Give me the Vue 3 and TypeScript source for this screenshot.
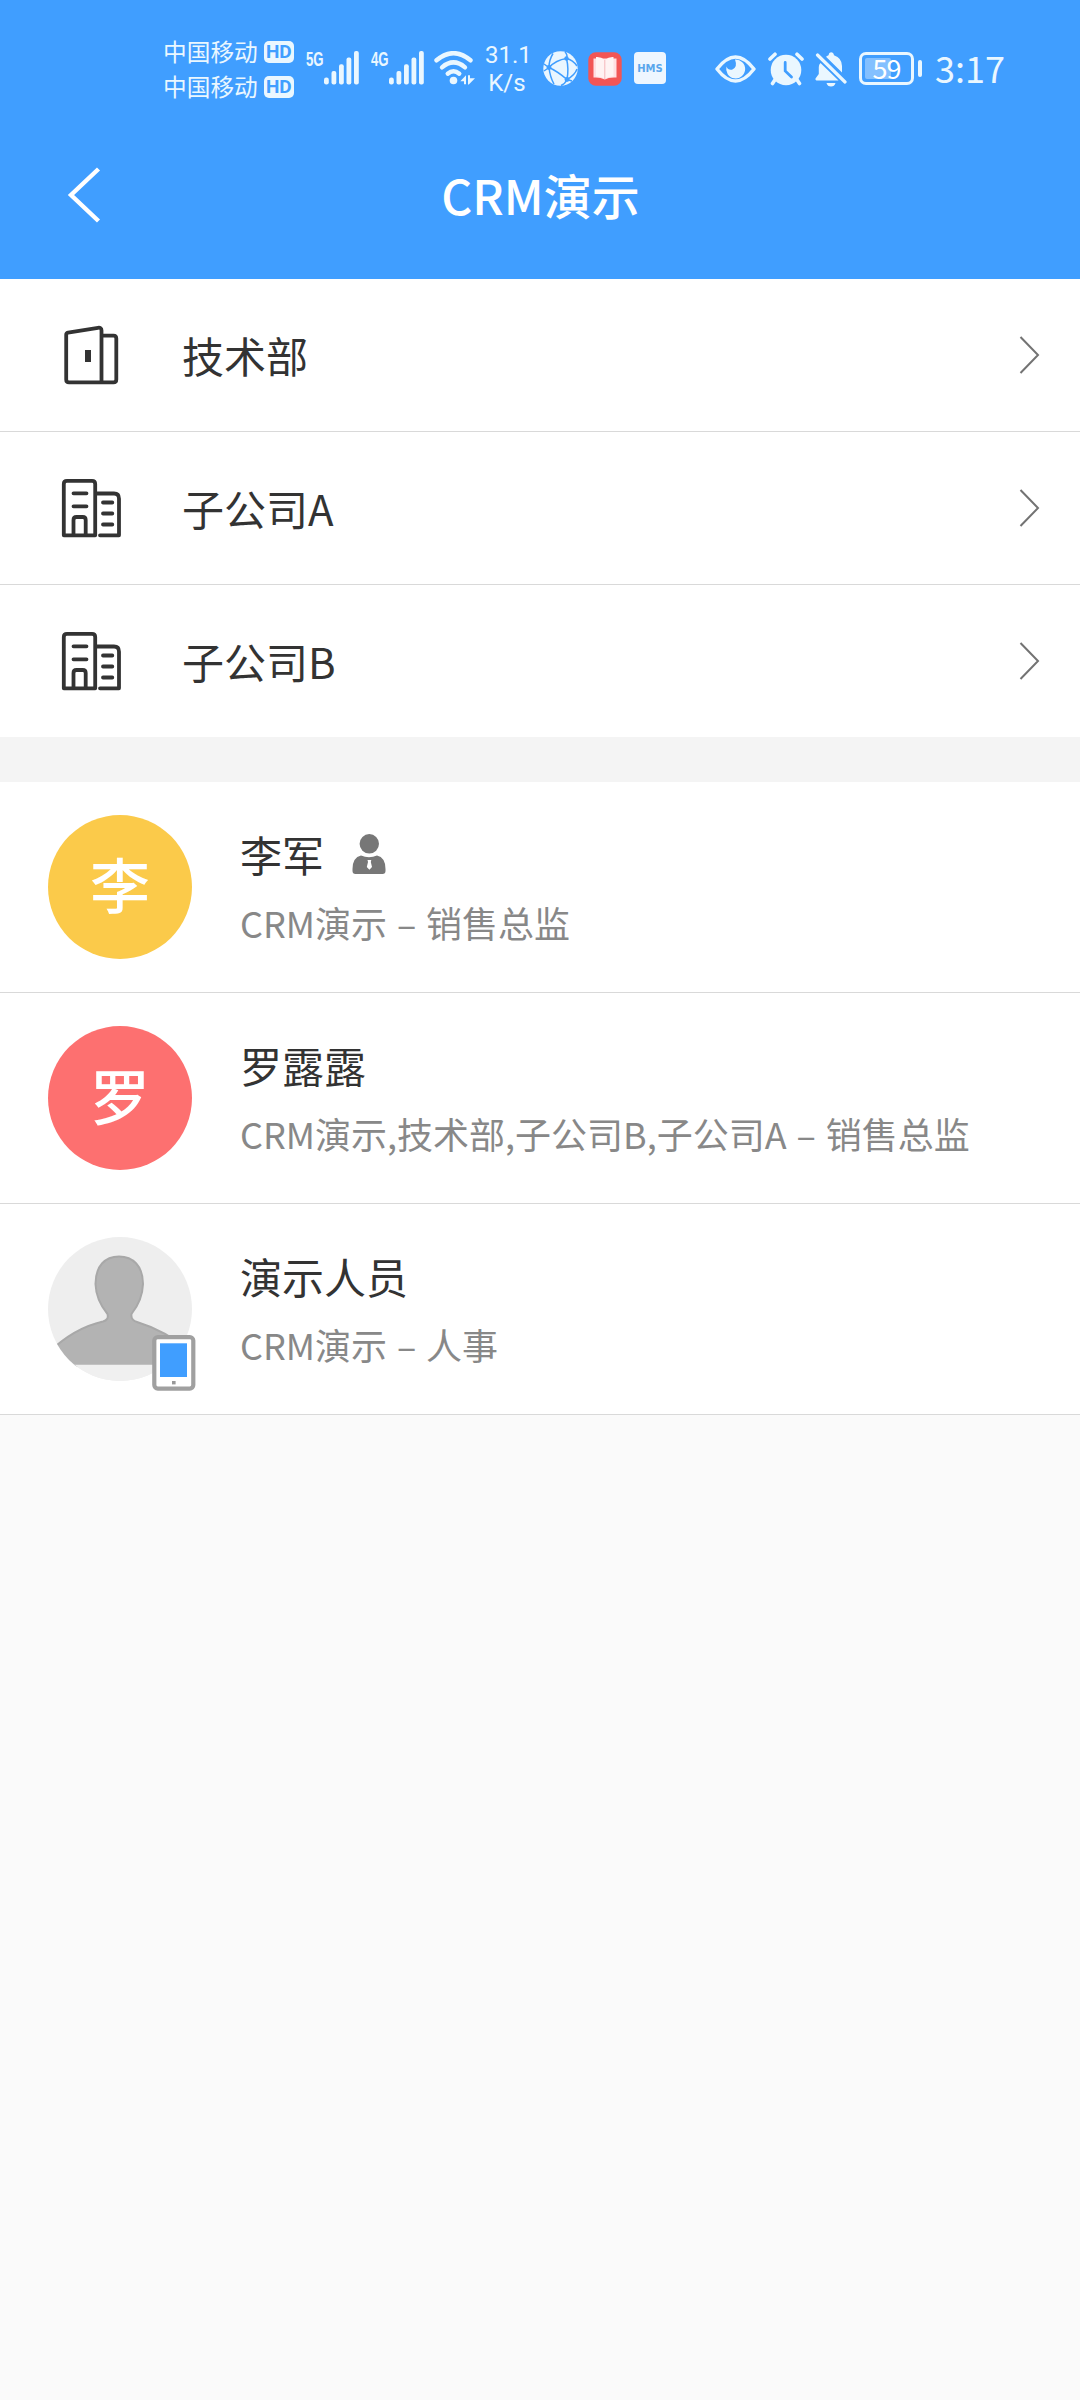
<script setup lang="ts">
interface Department {
  name: string
  kind: 'door' | 'building'
}

interface Member {
  name: string
  detail: string
  initial?: string
  color?: string
  leader?: boolean
}

const carriers: string[] = ['中国移动', '中国移动']
const networks: string[] = ['5G', '4G']

const departments: Department[] = [
  { name: '技术部', kind: 'door' },
  { name: '子公司A', kind: 'building' },
  { name: '子公司B', kind: 'building' },
]

const members: Member[] = [
  { name: '李军', detail: 'CRM演示 – 销售总监', initial: '李', color: '#fbca4a', leader: true },
  { name: '罗露露', detail: 'CRM演示,技术部,子公司B,子公司A – 销售总监', initial: '罗', color: '#fd7070' },
  { name: '演示人员', detail: 'CRM演示 – 人事' },
]
</script>

<template>
  <div class="page">
    <header class="header">
      <div class="status">
        <div class="carriers">
          <div v-for="(c, i) in carriers" :key="i" class="carrier">
            <span>{{ c }}</span><b class="hd">HD</b>
          </div>
        </div>
        <div v-for="n in networks" :key="n" class="signal">
          <span class="net">{{ n }}</span>
          <svg width="35" height="34" viewBox="0 0 35 34" fill="#eaf7ff">
            <rect x="0" y="26.5" width="4.8" height="7" rx="2.2" />
            <rect x="7.5" y="20" width="4.8" height="13.5" rx="2" />
            <rect x="15" y="13.3" width="4.8" height="20.2" rx="2" />
            <rect x="22.5" y="6.5" width="4.8" height="27" rx="2" />
            <rect x="30" y="0" width="4.8" height="33.5" rx="2" />
          </svg>
        </div>
        <svg class="wifi" width="42" height="34" viewBox="0 0 42 34">
          <g fill="none" stroke="#eaf7ff" stroke-width="4.4" stroke-linecap="round">
            <path d="M2.5 9.3Q19.5-5 36.5 9.3" />
            <path d="M8 16.3Q19.5 6.5 31 16.3" />
            <path d="M13.7 22.7Q19.5 17.8 25.3 22.7" />
          </g>
          <circle cx="19.5" cy="29.5" r="3.8" fill="#eaf7ff" />
          <path d="M26.300 30.300L32 24.300V33.300H30V30.300zM34 24.300H36V27.300H41L34.800 33.500H34z" fill="#eaf7ff" />
        </svg>
        <div class="speed"><span>31.1</span><span>K/s</span></div>
        <svg class="globe" width="36" height="36" viewBox="0 0 36 36">
          <circle cx="17.5" cy="17.5" r="17.2" fill="#eaf6ff" />
          <g fill="none" stroke="#409eff" stroke-width="1.5">
            <path d="M22 1Q25 4 23.500 7.500Q26 18 24 28.500Q22 33 18 34.500" />
            <path d="M1 13L6 16.500Q14 20 24 28.500L29 30" />
            <path d="M1 20L6 16.500Q13 9 23.500 7.500Q30 9 34 15" />
            <path d="M10 2.500Q6 9 6 16.500Q7 26 11 33M24 28.500Q32 24 34 18" />
          </g>
          <g fill="#409eff"><circle cx="23.500" cy="7.500" r="2.200" /><circle cx="6" cy="16.500" r="2.400" /><circle cx="24" cy="28.500" r="2.400" /></g>
        </svg>
        <svg class="reader" width="34" height="34" viewBox="0 0 34 34">
          <rect x=".3" y=".3" width="33.4" height="33.4" rx="7.5" fill="#f25555" />
          <path d="M5.500 6.500H28.500V25.500Q21 25 16.800 27.500Q12 25 5.500 25.500z" fill="#ffdfe2" />
          <path d="M8 5Q13 4.500 16.800 8V27Q13 24 8 24.500zM25.500 5Q21 4.500 16.800 8V27Q21 24 25.500 24.500z" fill="#fff3f3" />
          <path d="M16.800 8V27" stroke="#f6b7bb" stroke-width="1" />
        </svg>
        <span class="hms">HMS</span>
        <svg class="eye" width="41" height="28" viewBox="0 0 41 28">
          <path d="M2 14Q20.500-10 39 14Q20.500 38 2 14z" fill="none" stroke="#eaf7ff" stroke-width="3.400" stroke-linejoin="round" />
          <path d="M20 4.500A9.500 9.500 0 1 1 11.500 11.500Q13 15.500 17 14.700Q23 12.500 20 4.500z" fill="#eaf7ff" />
        </svg>
        <svg class="alarm" width="36" height="34" viewBox="0 0 36 34">
          <g stroke="#eaf7ff" stroke-width="3.600" stroke-linecap="round">
            <path d="M2 7L7 2.200M34 7L29 2.200M7.500 27L4.500 31.500M28.500 27L31.500 31.500" />
          </g>
          <circle cx="18" cy="18" r="15.300" fill="#eaf7ff" />
          <path d="M17.200 10.500V19L23.500 25" fill="none" stroke="#409eff" stroke-width="2.800" stroke-linecap="round" />
        </svg>
        <svg class="bell" width="32" height="35" viewBox="0 0 32 35" fill="#eaf7ff">
          <path d="M5.500 11L23.500 28.500H2.500Q0 28.500 .5 26.500L3.800 22V15Q3.800 12.500 5.500 11z" />
          <path d="M11 4.800Q12 3.800 13.500 3.200Q14 .3 16 .3Q18.500 .3 19 3.200Q27 6 27 14V20.500z" />
          <path d="M11.500 31H20.500Q19.500 34.500 16 34.500T11.500 31z" />
          <path d="M2.500 3L30 30" stroke="#eaf7ff" stroke-width="3.200" stroke-linecap="round" />
        </svg>
        <div class="battery"><span class="level"></span><span class="percent">59</span></div>
        <i class="nub"></i>
        <span class="clock">3:17</span>
      </div>
      <div class="nav">
        <svg class="back" width="34" height="56" viewBox="0 0 34 56">
          <path d="M31.500 2L4 28L31.500 54" fill="none" stroke="#fff" stroke-width="4.400" />
        </svg>
        <h1>CRM演示</h1>
      </div>
    </header>

    <section class="departments">
      <div v-for="d in departments" :key="d.name" class="department">
        <svg v-if="d.kind === 'door'" class="kind" width="60" height="60" viewBox="0 0 60 60" fill="none" stroke="#333" stroke-width="3.8" stroke-linejoin="round">
          <path d="M5.200 9.800Q5.200 8 7 7.600L37 2.800Q40.500 2.300 40.500 5.500V57.300H8Q5.200 57.300 5.200 54.500zM40.500 10.700H52.500Q55.300 10.700 55.300 13.500V54.500Q55.300 57.300 52.500 57.300H40.500" />
          <path d="M27 25V37" stroke-width="6" />
        </svg>
        <svg v-else class="kind" width="60" height="60" viewBox="0 0 60 60" fill="none" stroke="#333" stroke-width="3.800" stroke-linejoin="round" stroke-linecap="round">
          <path d="M2.800 57.300V6Q2.800 2.800 6 2.800H31Q34.200 2.800 34.200 6V57.300zM34.200 15.500H53Q58 15.500 58 20.700V57.300H39" />
          <path d="M12.500 56V42Q12.500 39 15.500 39H21.700Q24.700 39 24.700 42V56M12.500 15.300H25.500M12.500 28.300H25.500M42 24.500H51.300M42 35.500H51.300M42 46.500H51.300" />
        </svg>
        <span class="label">{{ d.name }}</span>
        <svg width="22" height="40" viewBox="0 0 22 40">
          <path d="M1.500 2L19 20L1.500 38" fill="none" stroke="#737373" stroke-width="2" />
        </svg>
      </div>
    </section>

    <section class="members">
      <div v-for="m in members" :key="m.name" class="member">
        <div v-if="m.initial" class="avatar" :style="{ background: m.color }">{{ m.initial }}</div>
        <div v-else class="avatar blank">
          <svg width="144" height="144" viewBox="0 0 144 144">
            <defs>
              <clipPath id="round"><circle cx="72" cy="72" r="72" /></clipPath>
            </defs>
            <circle cx="72" cy="72" r="72" fill="#eee" />
            <path clip-path="url(#round)" d="M0 129V116Q26 91 55 84.500Q61 83 59.500 77Q48 63 47.500 47C47.500 29 57 19.500 71 19.500S95 29 95 47Q94.500 63 83.500 77Q82.500 83 89 85Q119 94 144 116V129z" fill="#b3b3b3" stroke="#a8a8a8" stroke-width="2" />
            <path clip-path="url(#round)" d="M0 127.700H144V144H0z" fill="#f0f0f0" />
          </svg>
          <svg class="device" width="44" height="57" viewBox="0 0 44 57">
            <rect x="2.300" y="2.100" width="39" height="51.500" rx="3.500" fill="#fff" stroke="#a0a0a0" stroke-width="4.200" />
            <rect x="8" y="8.300" width="27" height="33.700" fill="#409eff" />
            <rect x="20" y="46" width="3.600" height="3.400" fill="#999" />
          </svg>
        </div>
        <div class="info">
          <div class="name">
            <span>{{ m.name }}</span>
            <svg v-if="m.leader" class="leader" width="34" height="40" viewBox="0 0 34 40" fill="#777">
              <circle cx="17.300" cy="9.800" r="9.700" />
              <path d="M9 21.500Q17 25 25 21.500Q33.500 23.500 33.500 35V37Q33.500 40 30.500 40H3.500Q.5 40 .5 37V35Q.5 23.500 9 21.500z" />
              <path d="M15.500 26H19.300L18.800 28L20 33L17.400 35.700L14.800 33L16 28z" fill="#fff" />
            </svg>
          </div>
          <div class="detail">{{ m.detail }}</div>
        </div>
      </div>
    </section>
  </div>
</template>

<style>
body {
  margin: 0;
  background: #fafafa;
}
</style>

<style scoped>
.page {
  width: 1080px;
  min-height: 2400px;
  background: #fafafa;
  font-family: "Noto Sans CJK SC", sans-serif;
  color: #333;
}
svg {
  display: block;
  flex: none;
}
.header {
  height: 279px;
  background: #409eff;
  color: #fff;
}
.status {
  display: flex;
  align-items: flex-start;
  height: 139px;
  padding: 51px 0 0 163px;
  box-sizing: border-box;
  color: #eaf7ff;
  white-space: nowrap;
}
.carriers {
  width: 132px;
  margin-top: -17px;
}
.carrier {
  display: flex;
  align-items: center;
  height: 35px;
  font-size: 23.700px;
  line-height: 35px;
}
.hd {
  width: 30px;
  height: 22px;
  margin-left: 6px;
  border-radius: 5px;
  background: #eaf7ff;
  color: #409eff;
  font: 700 19px/22px Roboto, sans-serif;
  text-align: center;
}
.signal {
  display: flex;
  width: 53px;
  margin: 0 0 0 11px;
  justify-content: space-between;
}
.signal + .signal {
  margin-left: 12px;
}
.net {
  width: 17px;
  font: 700 20px/16px "Liberation Sans", sans-serif;
  transform: scaleX(0.66);
  transform-origin: 0 0;
}
.wifi {
  margin-left: 10px;
}
.speed {
  display: flex;
  flex-direction: column;
  width: 44px;
  margin: -10px 0 0 9px;
  font: 400 24px/28px Roboto, sans-serif;
  text-align: center;
}
.globe {
  margin-left: 14px;
}
.reader {
  margin: 1px 0 0 9px;
}
.hms {
  width: 32px;
  height: 32px;
  margin: 1px 0 0 12px;
  border-radius: 4px;
  background: #eef6ff;
  color: #5aa6ec;
  font: 700 10px/33px "DejaVu Sans", sans-serif;
  text-align: center;
}
.eye {
  margin: 4px 0 0 49px;
}
.alarm {
  margin: 1px 0 0 12px;
}
.bell {
  margin: 1px 0 0 11px;
}
.battery {
  display: flex;
  position: relative;
  width: 55px;
  height: 33px;
  margin: 1px 0 0 12px;
  box-sizing: border-box;
  border: 3px solid #eaf7ff;
  border-radius: 7px;
  justify-content: center;
}
.level {
  position: absolute;
  left: 3px;
  top: 3px;
  width: 26px;
  height: 21px;
  border-radius: 2px;
  background: #83c0ff;
}
.percent {
  position: relative;
  color: #fff;
  font-size: 27px;
  line-height: 26px;
  letter-spacing: -1px;
}
.nub {
  width: 4px;
  height: 17px;
  margin: 9px 0 0 4px;
  border-radius: 2px;
  background: #eaf7ff;
}
.clock {
  margin: -2px 0 0 13px;
  font-size: 36px;
  line-height: 37px;
}
.nav {
  display: flex;
  align-items: center;
  height: 112px;
  padding: 0 67px;
}
.nav h1 {
  flex: 1;
  margin: -3px 33px 0 0;
  font-size: 48px;
  font-weight: 500;
  line-height: 72px;
  text-align: center;
}
.department {
  display: flex;
  align-items: center;
  height: 153px;
  padding: 0 39px 0 61px;
  box-sizing: border-box;
  border-bottom: 1px solid #d9d9d9;
  background: #fff;
}
.department:last-child {
  height: 152px;
  border-bottom: 0;
}
.label {
  flex: 1;
  margin: 0 0 0 61px;
  font-size: 42px;
  line-height: 60px;
}
.members {
  padding-top: 45px;
  background: #f4f4f4;
}
.member {
  display: flex;
  height: 211px;
  padding: 33px 48px 0;
  box-sizing: border-box;
  border-bottom: 1px solid #d9d9d9;
  background: #fff;
}
.avatar {
  position: relative;
  flex: none;
  width: 144px;
  height: 144px;
  border-radius: 50%;
  color: #fff;
  font-size: 60px;
  font-weight: 500;
  line-height: 136px;
  text-align: center;
}
.device {
  position: absolute;
  left: 104px;
  top: 98px;
}
.info {
  margin-left: 48px;
}
.name {
  display: flex;
  align-items: center;
  height: 60px;
  margin-top: 9px;
  font-size: 42px;
  line-height: 60px;
}
.leader {
  margin: 0 0 0 28px;
}
.detail {
  margin-top: 12px;
  font-size: 36px;
  line-height: 52px;
  color: #888;
  white-space: nowrap;
  word-spacing: 1.800px;
}
</style>
